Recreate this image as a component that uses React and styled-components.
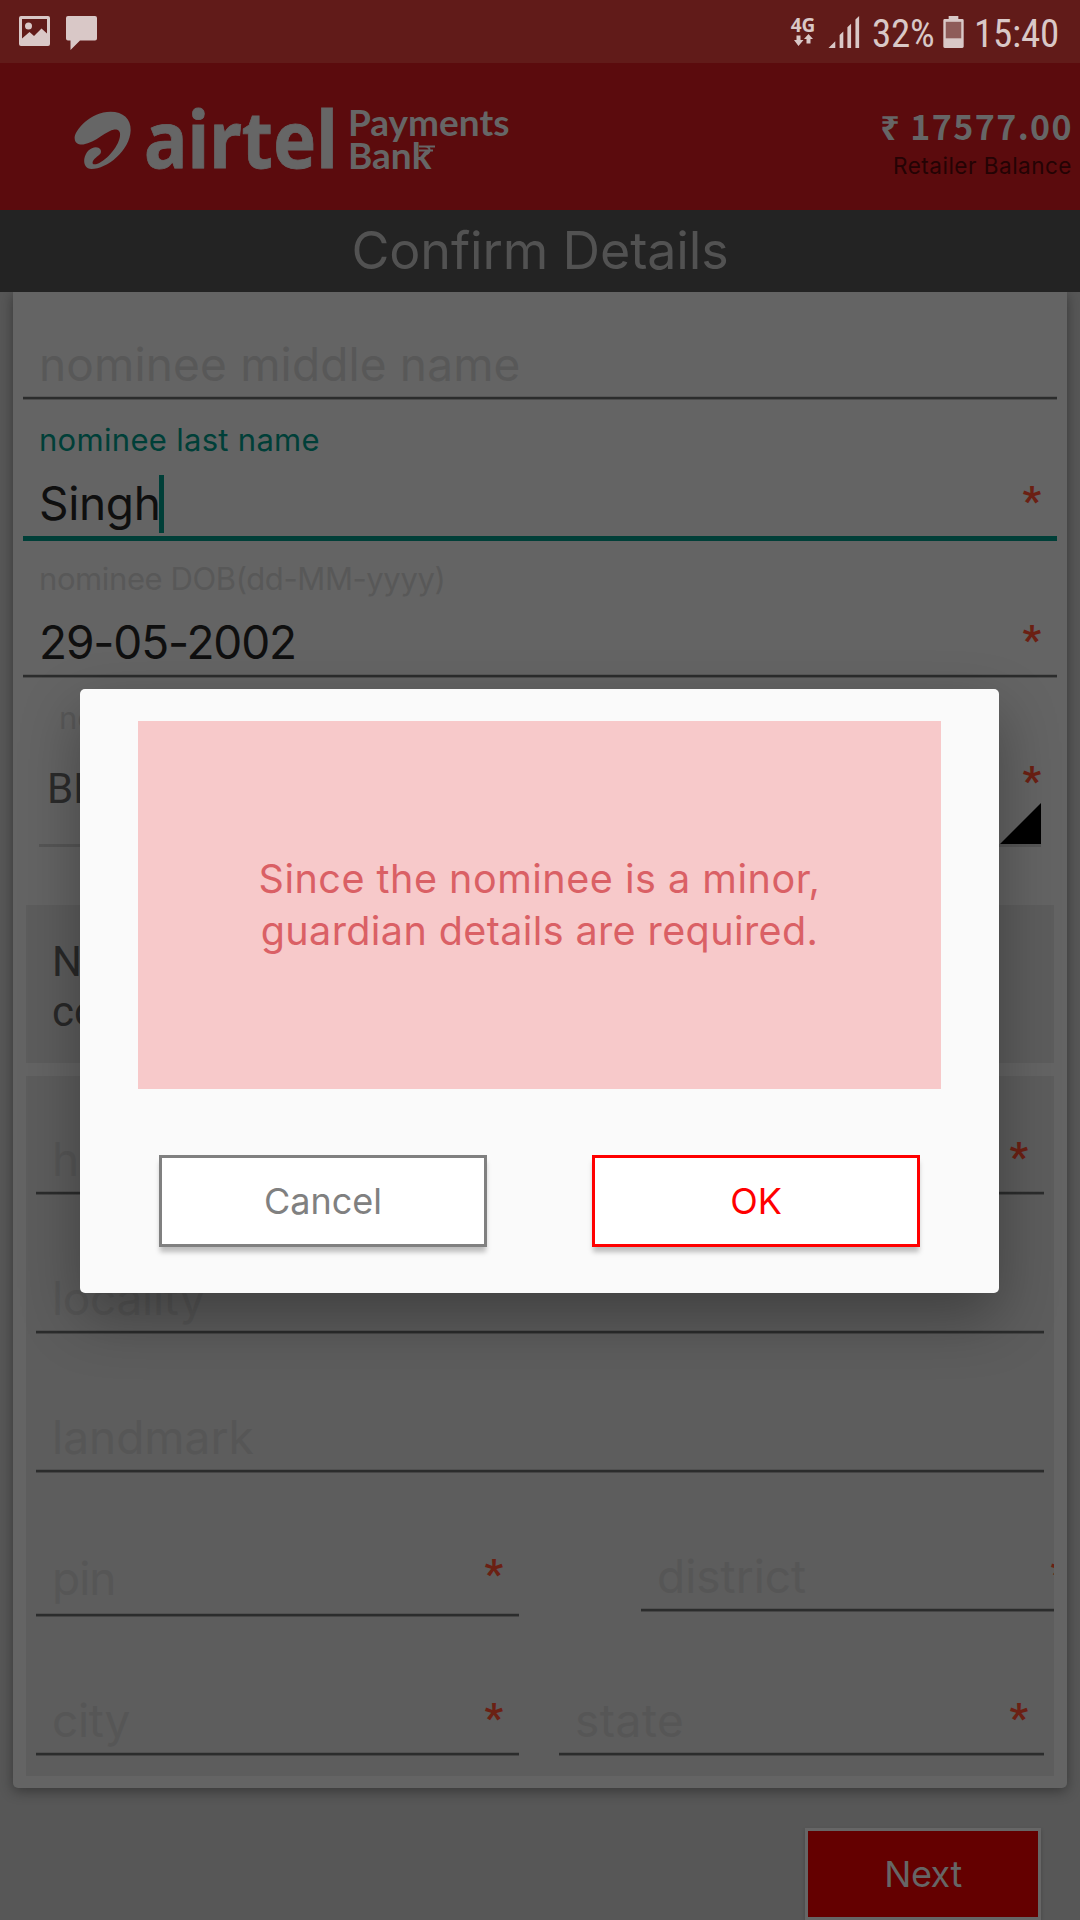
import React from 'react';
import styled, { createGlobalStyle } from 'styled-components';

const GlobalStyle = createGlobalStyle`
  *, *::before, *::after { box-sizing: border-box; }
  html, body { margin: 0; padding: 0; }
  body { background: #575757; }
`;

const Screen = styled.div`
  position: relative;
  display: flex;
  flex-direction: column;
  width: 1080px;
  height: 1920px;
  overflow: hidden;
  background: #575757;
  font-family: Inter, "Noto Sans", sans-serif;
`;

/* ---------- status bar ---------- */

const StatusBar = styled.header`
  display: flex;
  justify-content: space-between;
  flex: none;
  height: 63px;
  padding: 16px 21px 0 19px;
  background: #611b19;
  color: #d9c8c7;
`;

const StatusGroup = styled.div`
  display: flex;
  align-items: flex-start;
  gap: ${(p) => p.$gap || 0}px;
`;

const StatusText = styled.span`
  margin-left: ${(p) => p.$before || 0}px;
  width: ${(p) => p.$width}px;
  font: 400 39px/36px "Roboto Condensed", Roboto, sans-serif;
  letter-spacing: -0.2px;
  white-space: nowrap;
`;

const Network = styled.div`
  display: flex;
  flex-direction: column;
  align-items: center;
  width: 26px;
  margin-right: 12px;
  font: 700 19px/18px "Noto Sans", sans-serif;
`;

/* ---------- brand header ---------- */

const BrandBar = styled.div`
  display: flex;
  align-items: center;
  flex: none;
  height: 147px;
  padding: 0 8px 0 74px;
  background: #5b0b0d;
  color: #666;
`;

const Mark = styled.svg`
  display: block;
  margin-top: 7px;
`;

const Wordmark = styled.span`
  width: 204px;
  margin-left: 13px;
  padding-top: 2px;
  font: 700 78px/78px "Noto Sans", sans-serif;
  -webkit-text-stroke: 0.8px #666;
  white-space: nowrap;
  transform: scaleX(0.93);
  transform-origin: left center;
`;

const SubBrand = styled.div`
  position: relative;
  display: flex;
  flex-direction: column;
  padding-top: 3px;
  font: 700 37px/33px Lato, sans-serif;
`;

const RupeeTail = styled.svg`
  position: absolute;
  left: 71px;
  top: 43px;
`;

const Balance = styled.div`
  display: flex;
  flex-direction: column;
  align-items: flex-end;
  gap: 6px;
  align-self: flex-start;
  margin: 47px 0 0 auto;
`;

const Amount = styled.strong`
  height: 36px;
  font: 700 34px/31px "Noto Sans CJK SC", "Noto Sans", sans-serif;
  letter-spacing: 1.4px;
  margin-right: -1px;
`;

const BalanceLabel = styled.span`
  font-size: 22.5px;
  line-height: 28px;
  letter-spacing: 0.5px;
  color: #240304;
`;

const TitleBar = styled.h1`
  display: flex;
  align-items: center;
  justify-content: center;
  flex: none;
  height: 82px;
  margin: 0;
  padding-bottom: 1px;
  background: #232323;
  color: #525252;
  font-size: 52px;
  font-weight: 400;
  letter-spacing: -0.15px;
`;

/* ---------- form ---------- */

const Page = styled.main`
  display: flex;
  flex-direction: column;
  flex: 1;
  overflow: hidden;
`;

const Card = styled.section`
  flex: none;
  height: 1496px;
  margin: 0 13px;
  border-radius: 0 0 5px 5px;
  background: #646464;
  box-shadow: 0 3px 13px rgba(0, 0, 0, 0.38);
`;

const Fields = styled.div`
  padding: 0 10px;
`;

const FieldBox = styled.div`
  display: flex;
  flex-direction: column;
  justify-content: flex-end;
  flex: none;
  width: ${(p) => (p.$width ? `${p.$width}px` : 'auto')};
  height: ${(p) => p.$height}px;
`;

const Label = styled.label`
  margin: 0 16px 17px;
  font-size: 31px;
  line-height: 36px;
  letter-spacing: ${(p) => p.$tracking || 0}px;
  color: ${(p) => (p.$focused ? '#003f38' : '#585858')};
`;

const ValueRow = styled.div`
  display: flex;
  align-items: flex-start;
  height: 56px;
  margin-bottom: ${(p) => p.$gap || 5}px;
  padding: 0 16px;
`;

const Value = styled.span`
  font-size: 46px;
  line-height: 57px;
  letter-spacing: ${(p) => p.$tracking || 0}px;
  white-space: nowrap;
  color: ${(p) => (p.$hint ? p.$hint : '#0f0f0f')};
`;

const Caret = styled.i`
  width: 5px;
  height: 58px;
  margin-left: -2px;
  background: #003f38;
`;

const Star = styled.span`
  margin-left: auto;
  font: 700 41px/${(p) => p.$line || 53}px Roboto, sans-serif;
  color: #6b2013;
`;

const Rule = styled.div`
  flex: none;
  height: ${(p) => (p.$focused ? 5 : 2)}px;
  background: ${(p) => (p.$focused ? '#003f38' : '#2b2c2c')};
  box-shadow: ${(p) => (p.$focused ? 'none' : '0 1px 0 rgba(0,0,0,.24), 0 -1px 0 rgba(0,0,0,.12)')};
`;

const Spinner = styled.div`
  display: flex;
  justify-content: space-between;
  height: 170px;
  margin: 0 16px;
  border-bottom: 3px solid #565656;
`;

const SpinnerText = styled.div`
  display: flex;
  flex-direction: column;
  padding-top: 23px;
`;

const SpinnerLabel = styled(Label)`
  margin: 0 0 28px 20px;
`;

const SpinnerValue = styled.span`
  padding-left: 8px;
  font: 400 42px/50px Roboto, sans-serif;
  color: #2b2b2b;
`;

const SpinnerEnd = styled.div`
  display: flex;
  flex-direction: column;
  align-items: flex-end;
  justify-content: flex-end;
`;

const Arrow = styled.svg`
  display: block;
  margin-top: -5px;
`;

const Panel = styled.div`
  margin: ${(p) => p.$top}px 13px 0;
  height: ${(p) => p.$height}px;
  padding: ${(p) => p.$pad};
  overflow: hidden;
  background: #5d5d5d;
`;

const Note = styled.p`
  margin: 0;
  font: 400 42px/49.5px Roboto, sans-serif;
  color: #282828;
`;

const FieldRow = styled.div`
  display: flex;
  align-items: flex-start;
  gap: ${(p) => p.$gap}px;
`;

const NextButton = styled.button`
  flex: none;
  align-self: flex-end;
  width: 236px;
  height: 92px;
  margin: 40px 39px 0 0;
  padding: 0;
  border: 3px solid #666;
  background: #640000;
  color: #666;
  font: 400 36px/44px Inter, sans-serif;
  letter-spacing: -0.5px;
  box-shadow: 0 2px 4px rgba(0, 0, 0, 0.2);
`;

/* ---------- dialog ---------- */

const Dialog = styled.div`
  position: absolute;
  left: 80px;
  top: 689px;
  display: flex;
  flex-direction: column;
  width: 919px;
  height: 604px;
  padding: 32px 58px 46px;
  border-radius: 5px;
  background: #fafafa;
  box-shadow: 0 24px 60px rgba(0, 0, 0, 0.32);
`;

const Message = styled.p`
  display: flex;
  flex-direction: column;
  align-items: center;
  justify-content: center;
  height: 368px;
  margin: 0;
  background: #f7c9ca;
  color: #da6065;
  font-size: 39.5px;
  line-height: 52.3px;
`;

const MessageLine = styled.span`
  letter-spacing: ${(p) => p.$tracking}px;
`;

const Actions = styled.div`
  display: flex;
  justify-content: space-between;
  margin: 66px 21px 0;
`;

const ActionButton = styled.button`
  width: 328px;
  height: 92px;
  padding: 0;
  border: 3px solid ${(p) => p.$tone};
  background: #fff;
  color: ${(p) => p.$tone};
  font: 400 36px/44px Inter, sans-serif;
  box-shadow: 0 6px 5px -1px rgba(0, 0, 0, 0.25);
`;

const ON_CARD = '#585858';
const ON_PANEL = '#565656';

function Field({ height, width, label, labelTracking, value, hint, tracking, required, focused, gap, starLine }) {
  return (
    <FieldBox $height={height} $width={width}>
      {label && <Label $focused={focused} $tracking={labelTracking}>{label}</Label>}
      <ValueRow $gap={gap}>
        <Value $hint={hint} $tracking={tracking}>{value}</Value>
        {focused && <Caret />}
        {required && <Star $line={starLine}>*</Star>}
      </ValueRow>
      <Rule $focused={focused} />
    </FieldBox>
  );
}

const PictureIcon = () => (
  <svg width="31" height="30" viewBox="0 0 31 30">
    <path
      fill="currentColor"
      fillRule="evenodd"
      d="M2 0h27a2 2 0 0 1 2 2v26a2 2 0 0 1-2 2H2a2 2 0 0 1-2-2V2a2 2 0 0 1 2-2Zm1 3v19.500l7.500-6.500 4.500 4 7.500-7.500 5.500 5V3Z"
    />
    <circle cx="9.500" cy="10" r="3.500" fill="currentColor" />
  </svg>
);

const ChatIcon = () => (
  <svg width="31" height="34" viewBox="0 0 31 34">
    <path fill="currentColor" d="M2 0h27a2 2 0 0 1 2 2v20.500a2 2 0 0 1-2 2H14L4.500 34v-9.500H2a2 2 0 0 1-2-2V2a2 2 0 0 1 2-2Z" />
  </svg>
);

const DataArrows = () => (
  <svg width="19" height="12" viewBox="0 0 19 12">
    <path fill="currentColor" d="M2.500 1.500h4v4.500h3L4.500 12 0 6h2.500ZM12.500 9.500h4v-4.500H19L14.500 0 10 5h2.500Z" />
  </svg>
);

const SignalIcon = () => (
  <svg width="32" height="32" viewBox="0 0 32 33">
    <path fill="currentColor" d="M0 33 7 26v7ZM11.500 19.500l3.800-3.500v17h-3.800ZM19.500 11.500l3.800-3.500v25h-3.800ZM27.800 3.500l3.800-3.500v33h-3.800Z" />
  </svg>
);

const BatteryIcon = () => (
  <svg width="21" height="32" viewBox="0 0 21 33">
    <path fill="currentColor" d="M5.500 0h10v3h4A1.500 1.500 0 0 1 21 4.500v27a1.500 1.500 0 0 1-1.500 1.500h-18A1.500 1.500 0 0 1 0 31.500v-27A1.500 1.500 0 0 1 1.500 3h4Z" />
    <rect x="2.500" y="6" width="16" height="17" fill="#8e5c59" />
  </svg>
);

const BrandMark = () => (
  <Mark width="57" height="59" viewBox="41 61 172 176">
    <path
      fill="currentColor"
      d="M43 143C41 118 92 62 151 62C190 62 213 84 212 118C210 180 140 235 94 235C77 235 70 222 72 205C75 184 91 169 107 169C119 169 126 179 121 188C115 197 98 203 97 216C97 222 104 222 112 219C142 207 178 164 180 133C181 120 173 115 163 116C140 118 106 156 69 161C53 162 44 157 43 143Z"
    />
  </Mark>
);

export default function App() {
  return (
    <>
      <GlobalStyle />
      <Screen>
        <StatusBar>
          <StatusGroup $gap={16}>
            <PictureIcon />
            <ChatIcon />
          </StatusGroup>
          <StatusGroup>
            <Network>
              4G
              <DataArrows />
            </Network>
            <SignalIcon />
            <StatusText $before={12} $width={71}>32%</StatusText>
            <BatteryIcon />
            <StatusText $before={10} $width={85}>15:40</StatusText>
          </StatusGroup>
        </StatusBar>

        <BrandBar>
          <BrandMark />
          <Wordmark>airtel</Wordmark>
          <SubBrand>
            <span>Payments</span>
            <span>Bank</span>
            <RupeeTail width="17" height="10" viewBox="0 0 17 10">
              <path fill="none" stroke="currentColor" strokeWidth="2" d="M0 1.500h16M0 5.500h14M6 1.500q5 .5 4.500 4t-6 4" />
            </RupeeTail>
          </SubBrand>
          <Balance>
            <Amount>₹ 17577.00</Amount>
            <BalanceLabel>Retailer Balance</BalanceLabel>
          </Balance>
        </BrandBar>

        <TitleBar>Confirm Details</TitleBar>

        <Page>
          <Card>
            <Fields>
              <Field height={107} value="nominee middle name" hint={ON_CARD} tracking={0.15} />
              <Field height={142} label="nominee last name" labelTracking={0.3} value="Singh" tracking={-0.35} focused required />
              <Field height={136} label="nominee DOB(dd-MM-yyyy)" labelTracking={-0.4} value="29-05-2002" tracking={-1.15} required />
              <Spinner>
                <SpinnerText>
                  <SpinnerLabel>nominee relation</SpinnerLabel>
                  <SpinnerValue>BROTHER</SpinnerValue>
                </SpinnerText>
                <SpinnerEnd>
                  <Star>*</Star>
                  <Arrow width="41" height="41" viewBox="0 0 41 41">
                    <path d="M41 0v41H0Z" />
                  </Arrow>
                </SpinnerEnd>
              </Spinner>
            </Fields>

            <Panel $top={58} $height={158} $pad="32px 26px 0">
              <Note>
                Nominee address same as
                <br />
                communication address
              </Note>
            </Panel>

            <Panel $top={13} $height={700} $pad="0 10px">
              <Field height={118} value="house no" hint={ON_PANEL} required />
              <Field height={139} value="locality" hint={ON_PANEL} tracking={-0.3} />
              <Field height={139} value="landmark" hint={ON_PANEL} />
              <FieldRow $gap={122}>
                <Field height={144} width={483} value="pin" hint={ON_PANEL} tracking={-1} gap={8} starLine={49} required />
                <Field height={139} width={444} value="district" hint={ON_PANEL} required />
              </FieldRow>
              <FieldRow $gap={40}>
                <Field height={139} width={483} value="city" hint={ON_PANEL} tracking={-0.3} required />
                <Field height={139} width={485} value="state" hint={ON_PANEL} tracking={0.5} required />
              </FieldRow>
            </Panel>
          </Card>
          <NextButton>Next</NextButton>
        </Page>

        <Dialog role="dialog">
          <Message>
            <MessageLine $tracking={0.52}>Since the nominee is a minor,</MessageLine>
            <MessageLine $tracking={0.4}>guardian details are required.</MessageLine>
          </Message>
          <Actions>
            <ActionButton $tone="#808080">Cancel</ActionButton>
            <ActionButton $tone="#ff0000">OK</ActionButton>
          </Actions>
        </Dialog>
      </Screen>
    </>
  );
}
